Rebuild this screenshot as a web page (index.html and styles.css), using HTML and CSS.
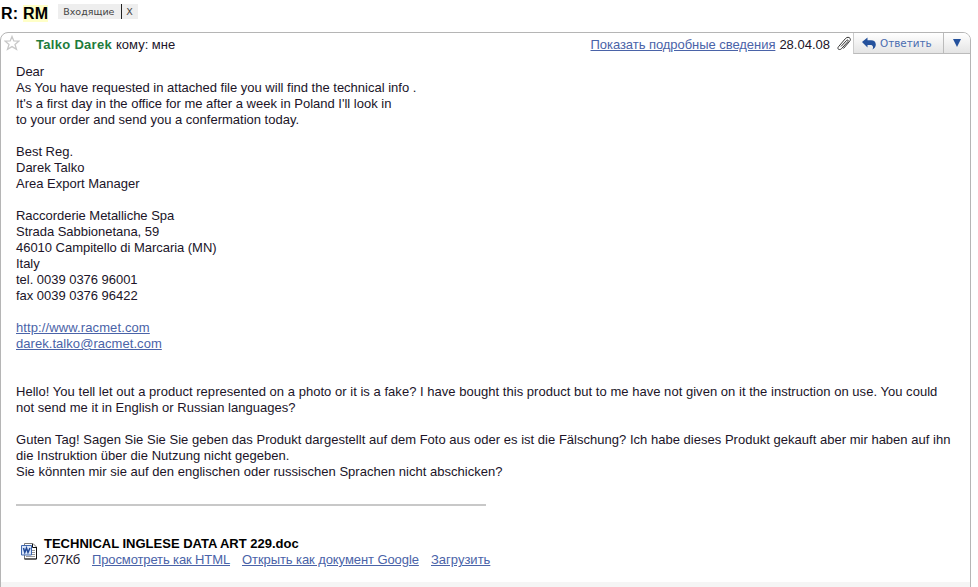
FILE: index.html
```html
<!DOCTYPE html>
<html lang="ru">

<head>
    <meta charset="UTF-8">
    <title>R: RM</title>
    <link rel="stylesheet" href="styles.css">
</head>

<body>
    <header class="subject">
        <h1>R: <span class="highlight">RM</span></h1>
        <div class="tag">
            <span class="tag-name">Входящие</span>
            <span class="tag-close">X</span>
        </div>
    </header>

    <main class="message">
        <div class="message-header">
            <svg class="star" width="16" height="16" viewBox="0 0 16 16">
                <path d="M8 1.500l1.800 4.400 5 .3-3.800 3.200 1.500 4.900L8 11.600l-4.500 2.700L5 9.400 1.200 6.200l5-.3z" />
            </svg>
            <span class="sender">Talko Darek</span>
            <span class="to">кому: мне</span>
            <a class="details" href="#">Показать подробные сведения</a>
            <span class="date">28.04.08</span>
            <svg class="clip" width="16" height="16" viewBox="0 0 16 16">
                <path d="M5 10.500l5.500-6c1.200-1.200 2.400-.2 1.300 1.200L5.500 12.700c-1.700 1.800-5 .5-3-2L9.500 2.500c2.500-2.700 6.500-.3 4.200 2.700L7.500 12.500" />
            </svg>
            <div class="actions">
                <button class="reply">
                    <svg width="14" height="13" viewBox="0 0 14 13">
                        <path d="M0 5L5.500.5V3.200H9c3 0 4.800 1.500 4.800 4.300 0 2.300-1.300 4-3.300 5 1-2 .8-4.500-2-4.500h-3v2.500z" />
                    </svg>
                    <span>Ответить</span>
                </button>
                <button class="more">
                    <svg width="8" height="8" viewBox="0 0 8 8">
                        <path d="M0 0h8L4 8z" />
                    </svg>
                </button>
            </div>
        </div>

        <div class="message-body">
            <p>
                Dear<br>
                As You have requested in attached file you will find the technical info .<br>
                It's a first day in the office for me after a week in Poland I'll look in<br>
                to your order and send you a confermation today.
            </p>
            <p>
                Best Reg.<br>
                Darek Talko<br>
                Area Export Manager
            </p>
            <p class="address">
                Raccorderie Metalliche Spa<br>
                Strada Sabbionetana, 59<br>
                46010 Campitello di Marcaria (MN)<br>
                Italy<br>
                tel. 0039 0376 96001<br>
                fax 0039 0376 96422
            </p>
            <p class="contacts">
                <a class="site" href="#">http://www.racmet.com</a><br>
                <a href="#">darek.talko@racmet.com</a>
            </p>
            <p class="english">
                Hello! You tell let out a product represented on a photo or it is a fake? I have bought this product but to me have not given on it the instruction on use. You could<br>
                not send me it in English or Russian languages?
            </p>
            <p class="german">
                Guten Tag! Sagen Sie Sie Sie geben das Produkt dargestellt auf dem Foto aus oder es ist die Fälschung? Ich habe dieses Produkt gekauft aber mir haben auf ihn<br>
                die Instruktion über die Nutzung nicht gegeben.<br>
                Sie könnten mir sie auf den englischen oder russischen Sprachen nicht abschicken?
            </p>
        </div>

        <div class="attachment">
            <svg class="doc" width="17" height="17" viewBox="0 0 17 17">
                <path class="page" d="M3.500.5h8.500l3.500 3.500v12h-12z" />
                <path class="edge" d="M11.500 1v3.500h3.500M15.500 4v12h-12" />
                <path class="lines" d="M11 7.500h3M11 9.500h3M11 11.500h3M5 13.500h9" />
                <path class="badge" d="M.5 2.500h10v9.500H.5z" />
                <path class="mark" d="M2.500 5l1.300 4.500L5.500 5 7 9.500 9 5" />
            </svg>
            <div class="file">
                <div class="file-name">TECHNICAL INGLESE DATA ART 229.doc</div>
                <div class="file-links">
                    <span class="size">207Кб</span>
                    <a class="view" href="#">Просмотреть как HTML</a>
                    <a class="open" href="#">Открыть как документ Google</a>
                    <a class="save" href="#">Загрузить</a>
                </div>
            </div>
        </div>
        <div class="message-footer"></div>
    </main>
</body>

</html>
```
FILE: styles.css
```css
body {
    margin: 0;
    height: 587px;
    overflow: hidden;
    background-color: #fff;
    color: #201428;
    font-family: "Liberation Sans", Arial, sans-serif;
    font-size: 13px;
    line-height: 16px;
}

a {
    color: #4a63a8;
    white-space: nowrap;
}

.subject {
    display: flex;
    height: 32px;
}

h1 {
    margin: 4px 0 0 1px;
    color: #000;
    font-size: 16px;
    line-height: 19px;
    letter-spacing: 0.2px;
}

.highlight {
    background-color: #ffffc8;
}

.tag {
    display: flex;
    margin: 4px 0 0 10px;
    height: 15px;
    background-color: #eee;
    color: #444;
    font-family: "DejaVu Sans", sans-serif;
    font-size: 9.5px;
    line-height: 15px;
}

.tag-name {
    width: 58px;
    padding-left: 5px;
    border-right: 1px solid #222;
}

.tag-close {
    width: 12px;
    padding-left: 4px;
}

.message {
    box-sizing: border-box;
    width: 971px;
    height: 570px;
    border: 1px solid #b5b5b5;
    border-radius: 8px;
    overflow: hidden;
}

.message-header {
    display: flex;
    height: 31px;
    line-height: 24px;
    white-space: nowrap;
}

.star {
    margin: 2px 0 0 3px;
    fill: #fff;
    stroke: #c8c8c8;
    stroke-width: 1.3;
}

.sender {
    width: 80px;
    padding-left: 16px;
    color: #1e7c3c;
    font-weight: bold;
    letter-spacing: 0.3px;
}

.to {
    flex: 1;
}

.details {
    letter-spacing: -0.05px;
}

.date {
    margin: 0 6px 0 4px;
}

.clip {
    margin-top: 3px;
    fill: none;
    stroke: #333;
}

.actions {
    display: flex;
    height: 20px;
    margin-left: 1px;
    border-bottom: 1px solid #bbb;
    border-left: 1px solid #ccc;
}

.actions button {
    display: flex;
    align-items: center;
    box-sizing: border-box;
    margin: 0;
    padding: 0;
    border: 0;
    background: linear-gradient(#fff, #e4e4e4);
}

.actions path {
    fill: #24519c;
}

.reply {
    width: 89px;
}

.reply svg {
    margin: 0 4px 0 8px;
}

.reply span {
    color: #4a6db0;
    font-family: "DejaVu Sans", sans-serif;
    font-size: 10.4px;
}

.actions .more {
    width: 27px;
    padding-left: 9px;
    border-left: 1px solid #bbb;
}

.message-body {
    width: 950px;
    padding-left: 15px;
    white-space: nowrap;
}

.message-body p {
    margin: 0 0 16px;
}

.address {
    letter-spacing: -0.03px;
}

.message-body .contacts {
    margin-bottom: 32px;
    letter-spacing: 0.05px;
}

.contacts .site {
    letter-spacing: 0.11px;
}

.english {
    letter-spacing: 0.03px;
}

.german {
    letter-spacing: 0.02px;
}

.attachment {
    display: flex;
    width: 470px;
    margin: 24px 0 0 15px;
    padding-top: 30px;
    border-top: 2px solid #c8c8c8;
}

.doc {
    flex: none;
    margin: 7px 6px 0 5px;
}

.page {
    fill: #fff;
    stroke: #777;
}

.edge {
    fill: none;
    stroke: #111;
}

.lines {
    stroke: #999;
}

.badge {
    fill: #dbe7fa;
    stroke: #3f67ae;
}

.mark {
    fill: none;
    stroke: #234a97;
    stroke-width: 1.5;
}

.file-name {
    color: #000;
    font-weight: bold;
    white-space: nowrap;
}

.file-links {
    display: flex;
    gap: 12px;
    white-space: nowrap;
}

.size {
    width: 36px;
    letter-spacing: -0.1px;
}

.view {
    width: 138px;
    letter-spacing: -0.12px;
}

.open {
    width: 177px;
    letter-spacing: -0.08px;
}

.message-footer {
    height: 20px;
    margin-top: 14px;
    background-color: #f5f5f5;
}
```
